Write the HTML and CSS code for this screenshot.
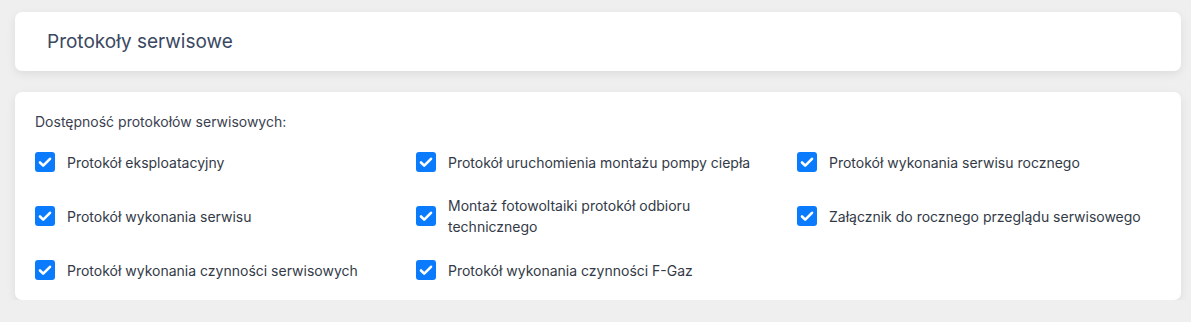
FILE: index.html
```html
<!DOCTYPE html>
<html lang="pl">

<head>
    <meta charset="UTF-8">
    <meta name="viewport" content="width=device-width, initial-scale=1.0">
    <title>Protokoły serwisowe</title>
    <link rel="stylesheet" href="styles.css">
</head>

<body>
    <div class="page">
        <div class="card card-header">
            <h1 class="title">Protokoły serwisowe</h1>
        </div>

        <div class="card card-body">
            <p class="label">Dostępność protokołów serwisowych:</p>
            <div class="options">
                <label class="option"><input type="checkbox" checked><span>Protokół eksploatacyjny</span></label>
                <label class="option"><input type="checkbox" checked><span>Protokół uruchomienia montażu pompy ciepła</span></label>
                <label class="option"><input type="checkbox" checked><span>Protokół wykonania serwisu rocznego</span></label>
                <label class="option"><input type="checkbox" checked><span>Protokół wykonania serwisu</span></label>
                <label class="option"><input type="checkbox" checked><span>Montaż fotowoltaiki protokół odbioru technicznego</span></label>
                <label class="option"><input type="checkbox" checked><span>Załącznik do rocznego przeglądu serwisowego</span></label>
                <label class="option"><input type="checkbox" checked><span>Protokół wykonania czynności serwisowych</span></label>
                <label class="option"><input type="checkbox" checked><span>Protokół wykonania czynności F-Gaz</span></label>
            </div>
        </div>
    </div>
</body>

</html>
```

FILE: styles.css
```css
body {
    margin: 0;
    background-color: #efefef;
    font-family: Inter, 'Noto Sans', sans-serif;
    color: #333a47;
}

.page {
    padding: 12px 10px 0 15px;
    display: flex;
    flex-direction: column;
    gap: 21px;
}

.card {
    background-color: #fff;
    border-radius: 7px;
    box-shadow: 0 3px 10px rgba(0, 0, 0, 0.08);
}

.card-header {
    height: 59px;
    padding: 0 32px;
    display: flex;
    align-items: center;
}

.title {
    margin: 0;
    font-size: 19px;
    font-weight: 400;
    color: #3a4862;
}

.card-body {
    padding: 20px 20px 9px 20px;
}

.label {
    margin: 0 0 9px 0;
    font-size: 14px;
    line-height: 20px;
    color: #3a4150;
}

.options {
    display: grid;
    grid-template-columns: repeat(3, 381px);
    grid-auto-rows: 42px;
    row-gap: 12px;
}

.option {
    display: flex;
    align-items: center;
    gap: 12px;
    font-size: 14px;
    line-height: 21px;
    padding-right: 16px;
}

.option input {
    appearance: none;
    -webkit-appearance: none;
    flex: 0 0 20px;
    width: 20px;
    height: 20px;
    margin: 0;
    border-radius: 3px;
    background-color: #0b7bfe;
    background-image: url("data:image/svg+xml,%3Csvg xmlns='http://www.w3.org/2000/svg' viewBox='0 0 20 20'%3E%3Cpath d='M5 10.5l3.2 3.2L15 6.8' fill='none' stroke='white' stroke-width='2.6' stroke-linecap='round' stroke-linejoin='round'/%3E%3C/svg%3E");
    background-size: 20px 20px;
}
```
